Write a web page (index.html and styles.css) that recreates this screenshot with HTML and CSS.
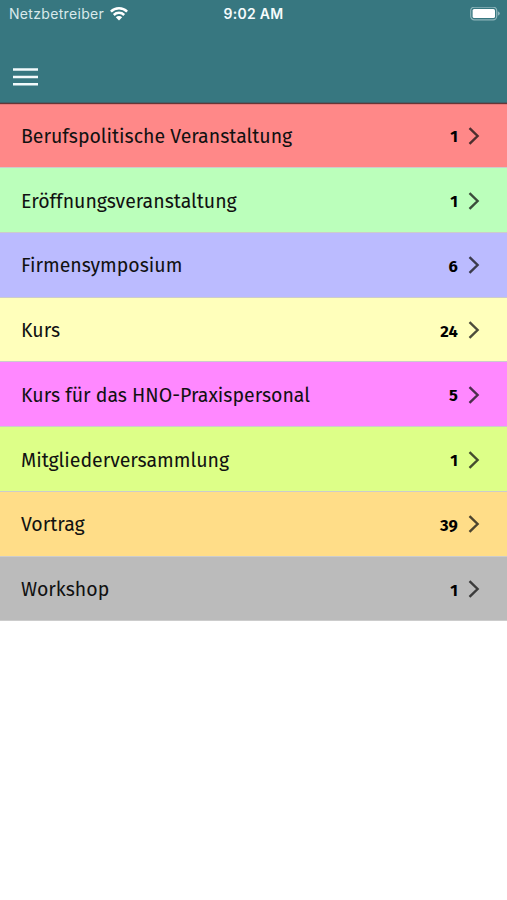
FILE: index.html
```
<!DOCTYPE html>
<html lang="de">
    <head>
        <meta charset="utf-8">
        <title>Veranstaltungen</title>
        <link rel="stylesheet" href="styles.css">
    </head>
    <body>
        <!-- icon used by every row -->
        <svg width="0" height="0" class="defs">
            <symbol id="chevron" viewBox="0 0 12 18">
                <path d="M1.5 1.2 L9.6 9 L1.5 16.8" fill="none" stroke="currentColor" stroke-width="2.4"/>
            </symbol>
        </svg>
        <header class="header">
            <div class="statusbar">
                <div class="carrier">
                    <span>Netzbetreiber</span>
                    <svg class="wifi" width="18" height="14" viewBox="0 0 18 14">
                        <g fill="none" stroke="currentColor" stroke-width="2.5">
                            <path d="M0.9 4.7 A11.5 11.5 0 0 1 17.1 4.7"/>
                            <path d="M3.8 8 A7.4 7.4 0 0 1 14.2 8"/>
                        </g>
                        <path d="M5.8 10.3 A4.6 4.6 0 0 1 12.2 10.3 L9 13.6 Z" fill="currentColor"/>
                    </svg>
                </div>
                <div class="time">9:02 AM</div>
                <div class="status">
                    <svg width="30" height="14" viewBox="0 0 30 14">
                        <rect x="0.7" y="0.2" width="26" height="12.6" rx="3.6" fill="none" stroke="#8db5ba" stroke-width="1.2"/>
                        <rect x="2.6" y="1.9" width="22.4" height="9.2" rx="1.6" fill="#fff"/>
                        <path d="M27.8 4.3 Q29.8 5.1 29.8 6.5 Q29.8 7.9 27.8 8.7 Z" fill="#8db5ba"/>
                    </svg>
                </div>
            </div>
            <div class="toolbar">
                <svg width="25" height="18" viewBox="0 0 25 18">
                    <path d="M0 1.5 H25 M0 9 H25 M0 16.3 H25" stroke="#f2fafb" stroke-width="2.5"/>
                </svg>
            </div>
        </header>
        <ul class="list">
            <li class="item red"><span class="label">Berufspolitische Veranstaltung</span><span class="count">1</span><svg class="arrow"><use href="#chevron"/></svg></li>
            <li class="item green"><span class="label">Eröffnungsveranstaltung</span><span class="count">1</span><svg class="arrow"><use href="#chevron"/></svg></li>
            <li class="item blue"><span class="label">Firmensymposium</span><span class="count">6</span><svg class="arrow"><use href="#chevron"/></svg></li>
            <li class="item yellow"><span class="label">Kurs</span><span class="count">24</span><svg class="arrow"><use href="#chevron"/></svg></li>
            <li class="item pink"><span class="label">Kurs für das HNO-Praxispersonal</span><span class="count">5</span><svg class="arrow"><use href="#chevron"/></svg></li>
            <li class="item lime"><span class="label">Mitgliederversammlung</span><span class="count">1</span><svg class="arrow"><use href="#chevron"/></svg></li>
            <li class="item orange"><span class="label">Vortrag</span><span class="count">39</span><svg class="arrow"><use href="#chevron"/></svg></li>
            <li class="item gray"><span class="label">Workshop</span><span class="count">1</span><svg class="arrow"><use href="#chevron"/></svg></li>
        </ul>
    </body>
</html>
```
FILE: styles.css
```
body        {margin: 0;
             background-color: white;
             font-family: "Fira Sans", "Noto Sans", sans-serif;}
svg         {display: block;
             flex: none;}
.defs       {display: none;}
.header     {box-sizing: border-box;
             height: 103.4px;
             background-color: #377780;
             border-bottom: 1px solid #40606a;
             box-shadow: 0 1px 1px rgba(0, 0, 0, 0.6);
             position: relative;}
.statusbar  {display: grid;
             grid-template-columns: 1fr auto 1fr;
             align-items: center;
             height: 27px;
             padding: 0 7px 0 9px;
             font-family: Inter, sans-serif;
             font-size: 14px;
             color: #f5fbfc;}
.carrier    {display: flex;
             align-items: center;
             gap: 6px;
             color: #d9e9eb;
             letter-spacing: 0.32px;}
.wifi       {color: white;}
.time       {font-weight: 600;
             letter-spacing: 0.3px;
             margin-right: 2px;}
.status     {display: flex;
             justify-content: flex-end;}
.toolbar    {padding: 41px 13px 0;}
.list       {list-style: none;
             margin: 0;
             padding: 0;}
.item       {box-sizing: border-box;
             display: flex;
             align-items: center;
             height: 64.75px;
             padding: 1px 27px 0 21px;
             border-bottom: 1px solid #cccccc;
             color: #111;}
.label      {flex: 1;
             font-size: 19.5px;
             padding-top: 1px;
             white-space: nowrap;}
.count      {font-size: 16.5px;
             font-weight: 700;
             letter-spacing: 0.2px;
             color: black;
             padding-top: 2px;}
.arrow      {width: 12px;
             height: 18px;
             margin-left: 10px;
             opacity: 0.75;}
.red        {background-color: #ff8888;}
.green      {background-color: #bbffbb;}
.blue       {background-color: #bbbbff;}
.yellow     {background-color: #ffffbb;}
.pink       {background-color: #ff88ff;}
.lime       {background-color: #ddff88;}
.orange     {background-color: #ffdd88;}
.gray       {background-color: #bbbbbb;}
```
